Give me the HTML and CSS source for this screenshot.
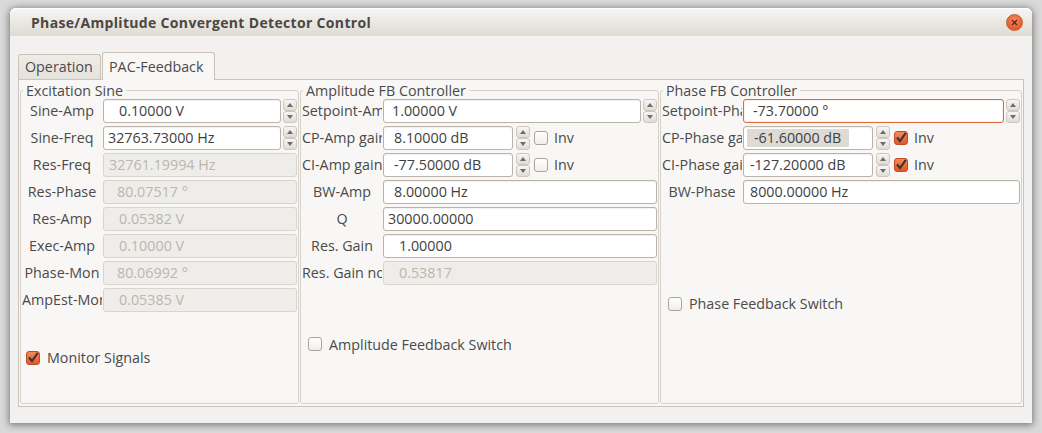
FILE: index.html
```html
<!DOCTYPE html>
<html>
<head>
<meta charset="utf-8">
<title>Phase/Amplitude Convergent Detector Control</title>
<link rel="stylesheet" href="styles.css">
</head>
<body>
<div class="window">
  <div class="titlebar">
    <span class="title">Phase/Amplitude Convergent Detector Control</span>
    <span class="close"><svg width="7" height="7" viewBox="0 0 7 7"><path d="M1 1L6 6M6 1L1 6" stroke="#5b2513" stroke-width="1.3"/></svg></span>
  </div>
  <div class="content">
    <div class="tabs">
      <div class="tab">Operation</div>
      <div class="tab active">PAC-Feedback</div>
    </div>
    <div class="pane">
      <fieldset class="frame f1">
        <legend>Excitation Sine</legend>
        <div class="rows">
          <div class="row"><span class="lbl">Sine-Amp</span><span class="entry i16">0.10000 V</span><span class="spin"><span class="sb up"></span><span class="sb down"></span></span></div>
          <div class="row"><span class="lbl">Sine-Freq</span><span class="entry i5">32763.73000 Hz</span><span class="spin"><span class="sb up"></span><span class="sb down"></span></span></div>
          <div class="row"><span class="lbl">Res-Freq</span><span class="entry off i6">32761.19994 Hz</span></div>
          <div class="row"><span class="lbl">Res-Phase</span><span class="entry off i14">80.07517 °</span></div>
          <div class="row"><span class="lbl">Res-Amp</span><span class="entry off i16">0.05382 V</span></div>
          <div class="row"><span class="lbl">Exec-Amp</span><span class="entry off i16">0.10000 V</span></div>
          <div class="row"><span class="lbl">Phase-Mon</span><span class="entry off i14">80.06992 °</span></div>
          <div class="row"><span class="lbl">AmpEst-Mon</span><span class="entry off i16">0.05385 V</span></div>
        </div>
        <div class="bottom b1"><span class="chk on"><svg width="14" height="14" viewBox="0 0 14 14"><path d="M3 6.5L6 10L11.8 1.8" fill="none" stroke="#3e3430" stroke-width="2.1"/></svg></span><span class="btext">Monitor Signals</span></div>
      </fieldset>
      <fieldset class="frame f2">
        <legend>Amplitude FB Controller</legend>
        <div class="rows">
          <div class="row"><span class="lbl">Setpoint-Amp</span><span class="entry i9">1.00000 V</span><span class="spin"><span class="sb up"></span><span class="sb down"></span></span></div>
          <div class="row"><span class="lbl">CP-Amp gain</span><span class="entry short i11">8.10000 dB</span><span class="spin"><span class="sb up"></span><span class="sb down"></span></span><span class="chk"></span><span class="inv">Inv</span></div>
          <div class="row"><span class="lbl">CI-Amp gain</span><span class="entry short i11">-77.50000 dB</span><span class="spin"><span class="sb up"></span><span class="sb down"></span></span><span class="chk"></span><span class="inv">Inv</span></div>
          <div class="row"><span class="lbl">BW-Amp</span><span class="entry i11">8.00000 Hz</span></div>
          <div class="row"><span class="lbl">Q</span><span class="entry i5">30000.00000</span></div>
          <div class="row"><span class="lbl">Res. Gain</span><span class="entry i16">1.00000</span></div>
          <div class="row"><span class="lbl">Res. Gain norm</span><span class="entry off i16">0.53817</span></div>
        </div>
        <div class="bottom"><span class="chk"></span><span class="btext">Amplitude Feedback Switch</span></div>
      </fieldset>
      <fieldset class="frame f3">
        <legend>Phase FB Controller</legend>
        <div class="rows">
          <div class="row"><span class="lbl">Setpoint-Phase</span><span class="entry focus i10">-73.70000 °</span><span class="spin"><span class="sb up"></span><span class="sb down"></span></span></div>
          <div class="row"><span class="lbl">CP-Phase gain</span><span class="entry short i4"><span class="sel">-61.60000 dB</span></span><span class="spin"><span class="sb up"></span><span class="sb down"></span></span><span class="chk on"><svg width="14" height="14" viewBox="0 0 14 14"><path d="M3 6.5L6 10L11.8 1.8" fill="none" stroke="#3e3430" stroke-width="2.1"/></svg></span><span class="inv">Inv</span></div>
          <div class="row"><span class="lbl">CI-Phase gain</span><span class="entry short i7">-127.20000 dB</span><span class="spin"><span class="sb up"></span><span class="sb down"></span></span><span class="chk on"><svg width="14" height="14" viewBox="0 0 14 14"><path d="M3 6.5L6 10L11.8 1.8" fill="none" stroke="#3e3430" stroke-width="2.1"/></svg></span><span class="inv">Inv</span></div>
          <div class="row"><span class="lbl">BW-Phase</span><span class="entry i7">8000.00000 Hz</span></div>
        </div>
        <div class="bottom"><span class="chk"></span><span class="btext">Phase Feedback Switch</span></div>
      </fieldset>
    </div>
  </div>
</div>
</body>
</html>
```

FILE: styles.css
```css
* { box-sizing: border-box; }
html, body { margin: 0; height: 100%; }
body {
  background: #d9d9d9;
  font-family: "Open Sans", "DejaVu Sans", sans-serif;
  font-size: 14.3px;
  color: #4a4a4a;
  overflow: hidden;
}
.window {
  width: 1022px;
  height: 415px;
  margin: 8px 0 0 10px;
  background: #f2f1f0;
  border-radius: 6px 6px 0 0;
  box-shadow: 0 1px 7px 1px rgba(0, 0, 0, 0.45);
  display: flex;
  flex-direction: column;
}
.titlebar {
  height: 28px;
  flex: none;
  display: flex;
  align-items: center;
  padding: 0 9px 0 21px;
  background: linear-gradient(#f7f6f3, #dfdad3);
  border-radius: 6px 6px 0 0;
  box-shadow: inset 0 1px 0 #fff;
}
.title {
  flex: 1;
  font-weight: 700;
  font-size: 14px;
  letter-spacing: 0.33px;
  color: #4b4742;
}
.close {
  width: 17px;
  height: 17px;
  border-radius: 50%;
  background: radial-gradient(circle at 50% 35%, #f88b62, #e35a2f 72%);
  border: 1px solid #cf5a31;
  display: flex;
  align-items: center;
  justify-content: center;
}
.content {
  flex: 1;
  padding: 16px 8px 16px 8px;
  display: flex;
  flex-direction: column;
}
.tabs {
  display: flex;
  align-items: flex-start;
  gap: 1px;
  height: 28px;
  margin-bottom: -1px;
  position: relative;
  z-index: 1;
  flex: none;
}
.tab {
  width: 83px;
  height: 25px;
  margin-top: 2px;
  padding-left: 6px;
  border: 1px solid #c9c3bb;
  border-bottom: none;
  border-radius: 3px 3px 0 0;
  background: linear-gradient(#efece8, #e5e1dc);
  line-height: 24px;
  white-space: nowrap;
}
.tab.active {
  width: 113px;
  height: 28px;
  margin-top: 0;
  padding-top: 2px;
  background: #f8f7f6;
}
.pane {
  flex: 1;
  border: 1px solid #c9c3bb;
  background: #f8f7f6;
  padding: 2px 1px;
  display: flex;
  gap: 1px;
}
.frame {
  margin: 0;
  padding: 0 1px;
  border: 1px solid #d6d1ca;
  border-radius: 3px;
  min-width: 0;
  display: flex;
  flex-direction: column;
}
.f1 { width: 279px; }
.f2 { width: 359px; }
.f3 { width: 362px; }
.frame legend {
  padding: 0 3px;
  margin-left: 1px;
  line-height: 17px;
}
.rows {
  display: flex;
  flex-direction: column;
  gap: 3px;
}
.row {
  display: flex;
  align-items: center;
  height: 24px;
}
.lbl {
  flex: none;
  width: 80px;
  text-align: center;
  overflow: hidden;
  white-space: nowrap;
  line-height: 24px;
}
.entry {
  flex: 1;
  min-width: 0;
  height: 24px;
  margin-left: 1px;
  border: 1px solid #bab3aa;
  border-radius: 3px;
  background: #fff;
  line-height: 22px;
  white-space: nowrap;
  overflow: hidden;
  color: #3f3f3f;
  box-shadow: inset 0 1px 1px rgba(0, 0, 0, 0.06);
}
.entry.off {
  background: #efedea;
  border-color: #d9d4cd;
  color: #bab6b0;
  box-shadow: none;
}
.entry.focus {
  border-color: #e0693c;
  box-shadow: inset 0 0 0 1px rgba(240, 130, 90, 0.12);
}
.entry.short {
  flex: none;
  width: 130px;
}
.i4 { padding-left: 3px; }
.i5 { padding-left: 4px; }
.i6 { padding-left: 5px; }
.i7 { padding-left: 6px; }
.i9 { padding-left: 8px; }
.i10 { padding-left: 9px; }
.i11 { padding-left: 10px; }
.i14 { padding-left: 13px; }
.i16 { padding-left: 15px; }
.sel {
  display: inline-block;
  background: #dedbd6;
  line-height: 18px;
  padding: 0 8px 0 7px;
  vertical-align: middle;
  margin-top: -2px;
}
.spin {
  flex: none;
  width: 14px;
  height: 24px;
  margin-left: 2px;
  display: flex;
  flex-direction: column;
}
.short + .spin { margin-left: 3px; }
.sb {
  height: 12px;
  border: 1px solid #cdc7bf;
  border-radius: 3px;
  background: linear-gradient(#f7f6f4, #e0dcd6);
  display: flex;
  align-items: center;
  justify-content: center;
}
.sb.up::before {
  content: "";
  border-left: 3.5px solid transparent;
  border-right: 3.5px solid transparent;
  border-bottom: 4px solid #6e6c69;
}
.sb.down::before {
  content: "";
  border-left: 3.5px solid transparent;
  border-right: 3.5px solid transparent;
  border-top: 4px solid #6e6c69;
}
.chk {
  flex: none;
  width: 14px;
  height: 14px;
  margin-left: 4px;
  border: 1px solid #a9a49d;
  border-radius: 3px;
  background: linear-gradient(#ffffff, #f1efec);
  display: inline-flex;
  align-items: center;
  justify-content: center;
  overflow: visible;
}
.chk svg { flex: none; }
.chk.on {
  background: linear-gradient(#f58a5b, #e1572a);
  border-color: #bf4c24;
}
.inv {
  margin-left: 6px;
  line-height: 24px;
}
.bottom {
  flex: 1;
  display: flex;
  align-items: center;
  padding-left: 2px;
}
.b1 { padding-left: 0; }
.btext {
  margin-left: 7px;
}
```
